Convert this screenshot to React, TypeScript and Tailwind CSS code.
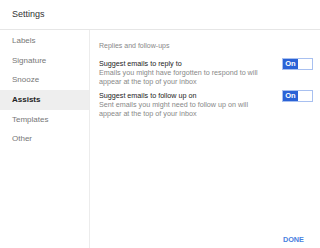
import React from "react";

function Toggle() {
  return (
    <div className="flex h-[12px] w-[31px] border border-[#a8c0f0] bg-white">
      <div className="flex h-full w-[15px] items-center justify-center bg-[#2a62d6] text-[7.5px] font-bold leading-none text-white">
        On
      </div>
    </div>
  );
}

export default function App() {
  const items = ["Labels", "Signature", "Snooze", "Assists", "Templates", "Other"];
  return (
    <div
      className="flex h-[248px] w-[320px] flex-col bg-white"
      style={{ fontFamily: '"Liberation Sans", Arial, sans-serif' }}
    >
      <div className="flex h-[30px] items-center border-b border-[#e6e6e6] px-[12px] text-[9px] text-[#333]">
        Settings
      </div>
      <div className="flex flex-1">
        <div className="flex w-[90px] flex-col border-r border-[#ececec] pt-[1px]">
          {items.map((it) => (
            <div
              key={it}
              className={
                "flex h-[19.7px] items-center px-[12px] text-[8px] " +
                (it === "Assists"
                  ? "bg-[#eeeeee] font-bold text-[#222]"
                  : "text-[#777]")
              }
            >
              {it}
            </div>
          ))}
        </div>
        <div className="relative flex flex-1 flex-col pl-[9px] pr-[7px] pt-[11px]">
          <div className="text-[7px] text-[#888]">Replies and follow-ups</div>
          <div className="mt-[7px] flex items-start justify-between">
            <div className="flex flex-col">
              <div className="text-[7.2px] leading-[9px] text-[#222]">Suggest emails to reply to</div>
              <div className="text-[7.2px] leading-[9px] text-[#888]">
                Emails you might have forgotten to respond to will
                <br />
                appear at the top of your inbox
              </div>
            </div>
            <div className="mt-[-1px]">
              <Toggle />
            </div>
          </div>
          <div className="mt-[5px] flex items-start justify-between">
            <div className="flex flex-col">
              <div className="text-[7.2px] leading-[9px] text-[#222]">Suggest emails to follow up on</div>
              <div className="text-[7.2px] leading-[9px] text-[#888]">
                Sent emails you might need to follow up on will
                <br />
                appear at the top of your inbox
              </div>
            </div>
            <div className="mt-[-1px]">
              <Toggle />
            </div>
          </div>
          <div className="mt-auto flex justify-end pb-[2px] pr-[9px]">
            <div className="text-[7.3px] font-bold text-[#4a7fe0]">DONE</div>
          </div>
        </div>
      </div>
    </div>
  );
}
